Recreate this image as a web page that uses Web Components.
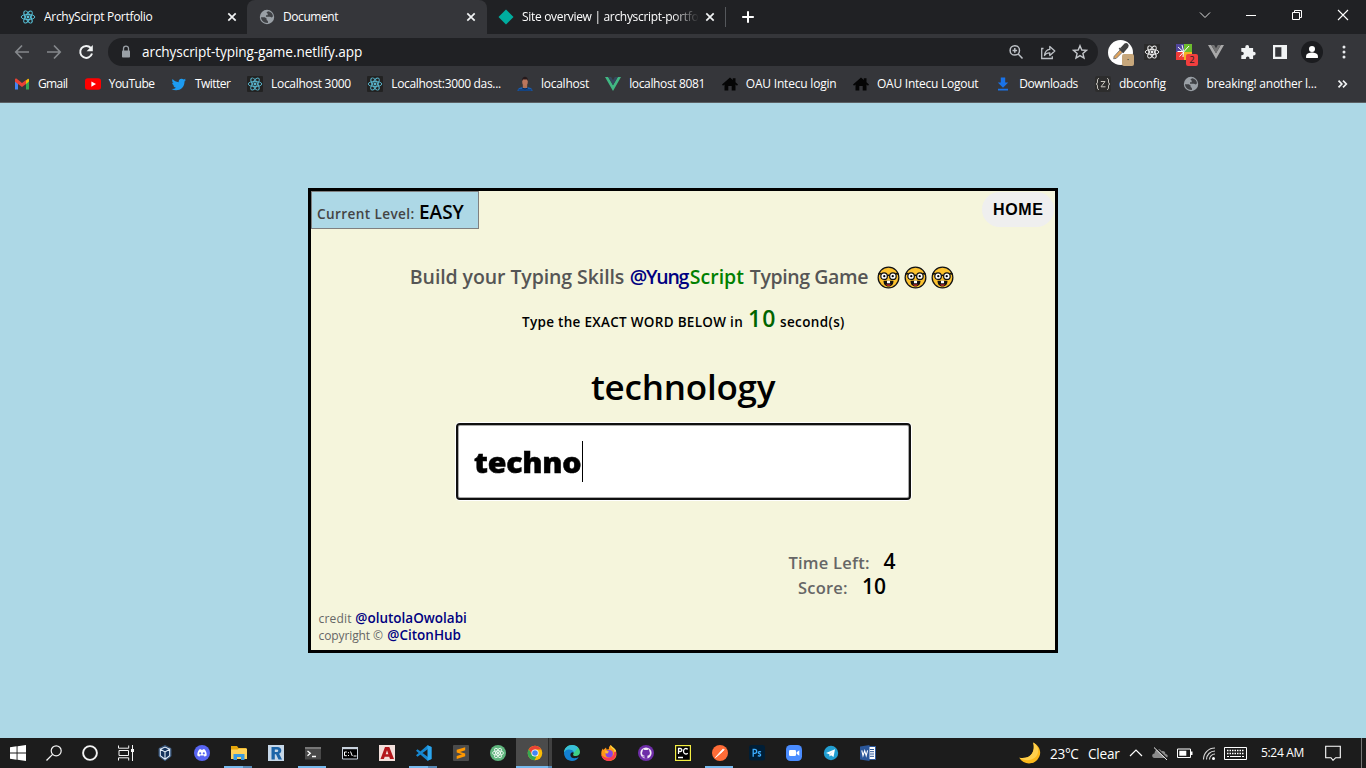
<!DOCTYPE html>
<html lang="en">
<head>
<meta charset="utf-8">
<title>Document</title>
<style>
html,body{margin:0;height:100%;overflow:hidden}
body{font-family:"Open Sans","Noto Sans",sans-serif;background:#add8e6}
</style>
</head>
<body>
<desktop-screen></desktop-screen>
<script>
const REACT = c => `<g fill="none" stroke="${c}" stroke-width=".95"><ellipse cx="8" cy="8" rx="6.8" ry="2.6"/><ellipse cx="8" cy="8" rx="6.8" ry="2.6" transform="rotate(60 8 8)"/><ellipse cx="8" cy="8" rx="6.8" ry="2.6" transform="rotate(120 8 8)"/></g><circle cx="8" cy="8" r="1.4" fill="${c}"/>`;
const ICONS = {
  react: REACT('#58c4dc'),
  reactBox: `<rect width="16" height="16" rx="1" fill="#222"/>` + REACT('#58b4cc'),
  reactExt: `<rect width="16" height="16" fill="#2b2b2b"/>` + REACT('#eee'),
  globe: `<circle cx="8" cy="8" r="7.200" fill="#9aa0a6"/><path d="M2 8.300h3.800l1.800 1.300v1.500l1.300.9v2C5 14.300 2.200 11.800 2 8.300zM7.400 3.200l2-1c2.800.6 4.400 2.600 4.600 5l-1.200 1.400-1.800-.9H7V6.300h1.700V4.800z" fill="#3f4145"/>`,
  close: `<path d="M4.300 4.300l7.400 7.400M11.700 4.300l-7.400 7.400" stroke="#f1f3f4" stroke-width="1.700"/>`,
  netlify: `<path d="M8 .5L15.500 8 8 15.500.5 8z" fill="#00ad9f"/>`,
  plus: `<path d="M8 2.200v11.600M2.200 8h11.600" stroke="#fff" stroke-width="2"/>`,
  winDown: `<path d="M3 5.500l5 5 5-5" fill="none" stroke="#ddd"/>`,
  winMin: `<path d="M3 8.500h10" stroke="#fff"/>`,
  winMax: `<path d="M3.500 5.500h7v7h-7zM5.500 5.500v-2h7v7h-2" fill="none" stroke="#fff"/>`,
  winClose: `<path d="M3 3l10 10M13 3L3 13" stroke="#fff" stroke-width="1.100"/>`,
  back: `<path d="M15 8H2M8 1.500L1.800 8 8 14.500" fill="none" stroke="#85888c" stroke-width="1.700"/>`,
  forward: `<path d="M1 8h13M8 1.500L14.200 8 8 14.500" fill="none" stroke="#85888c" stroke-width="1.700"/>`,
  reload: `<path d="M12.800 4A6 6 0 1 0 14 9.500" fill="none" stroke="#f1f3f4" stroke-width="2"/><path d="M14.800 1v6.200H8.600z" fill="#f1f3f4"/>`,
  lock: `<rect x="4" y="6.500" width="8" height="7" rx=".8" fill="#9aa0a6"/><path d="M5.500 7V4.600a2.500 2.500 0 0 1 5 0V7" fill="none" stroke="#9aa0a6" stroke-width="1.300"/>`,
  zoom: `<circle cx="6.800" cy="6.400" r="4.700" fill="none" stroke="#bdc1c6" stroke-width="1.500"/><path d="M10.200 10l4.300 4.500M4.500 6.400h4.600M6.800 4.100v4.600" stroke="#bdc1c6" stroke-width="1.500"/>`,
  share: `<path d="M3.500 4.500H1.700v10h10.600v-2.300" fill="none" stroke="#bdc1c6" stroke-width="1.300"/><path d="M4.500 11.500C5 7.800 7 5.700 9.800 5.400V2.500L14.800 7l-5 4.500V8.800C7.500 8.700 5.800 9.500 4.500 11.500z" fill="none" stroke="#bdc1c6" stroke-width="1.300" stroke-linejoin="round"/>`,
  star: `<path d="M8 1.700l1.800 4.300 4.700.4-3.600 3.100 1.100 4.600L8 11.600l-4 2.500 1.100-4.600L1.500 6.400 6.200 6z" fill="none" stroke="#c4c7cb" stroke-width="1.400"/>`,
  dropper: `<circle cx="8" cy="8" r="8" fill="#fff"/><path d="M3.600 12l.4-1.600 3.700-4L9.200 7.800l-4 4z" fill="#e0a35b" stroke="#777" stroke-width=".6"/><path d="M7.200 5.200l3 2.800M8.800 5l2-2.200c1.300-.7 2.300.5 1.600 1.600L10.400 6.800z" fill="#444" stroke="#444" stroke-width="1.200"/>`,
  spark: `<path fill="#51469b" d="M0 0h8v8H0z"/><path fill="#6cbd2e" d="M8 0h8v8H8z"/><path fill="#ef3b39" d="M0 8h8v8H0z"/><path fill="#f4b323" d="M8 8h8v8H8z"/><path d="M2 3l5 4.500M6 1l1.500 6M1.500 7.500h6M3.500 12.500L13 2M7.500 8L7 13" stroke="#fff" stroke-width="1"/>`,
  vue: `<path d="M0 1h3.200L8 9.300 12.800 1H16L8 15z" fill="#41b883"/><path d="M3.200 1h3L8 4.200 9.800 1h3L8 9.300z" fill="#35495e"/>`,
  vueGray: `<path d="M0 1h3.200L8 9.300 12.800 1H16L8 15z" fill="#a9a9a9"/><path d="M3.200 1h3L8 4.200 9.800 1h3L8 9.300z" fill="#737373"/>`,
  puzzle: `<path d="M1.300 4h4V3a1.900 1.900 0 0 1 3.800 0v1h4v3.700h.7a1.900 1.900 0 0 1 0 3.800h-.7V15H9.500v-.8a1.800 1.800 0 0 0-3.600 0v.8H1.300v-3.700H2a1.800 1.800 0 0 0 0-3.600h-.7z" fill="#f1f3f4"/>`,
  side: `<path d="M1 1h14v14H1zM3.200 3.200v9.600h6.200V3.200z" fill="#f1f3f4" fill-rule="evenodd"/>`,
  profile: `<circle cx="8" cy="8" r="8" fill="#1b1c1f"/><circle cx="8" cy="5.800" r="2.200" fill="#fff"/><path d="M3.700 12.400V11c0-2 2.800-2.600 4.300-2.600s4.300.6 4.300 2.600v1.400z" fill="#fff"/>`,
  dots: `<circle cx="8" cy="3" r="1.500" fill="#e8eaed"/><circle cx="8" cy="8" r="1.500" fill="#e8eaed"/><circle cx="8" cy="13" r="1.500" fill="#e8eaed"/>`,
  gmail: `<path d="M1 3.500V13.500h3V7z" fill="#4285f4"/><path d="M15 3.500V13.500h-3V7z" fill="#34a853"/><path d="M12 4.500L14 2.700c.5-.2 1 .3 1 .8v2L12 8z" fill="#fbbc04"/><path d="M1 3.600c0-.8 1-1.300 1.700-.8L8 7l4-3v4l-4 3.100L4 8 1 5.700z" fill="#ea4335"/>`,
  youtube: `<rect y="2.300" width="16" height="11.500" rx="2.800" fill="#f00"/><path d="M6.400 5.500v5.200L11 8.100z" fill="#fff"/>`,
  twitter: `<path d="M15 3.800l-1.500.5c.6-.4 1-.9 1.100-1.500l-1.900.7a3 3 0 0 0-5 2.700C5.200 6 3 4.900 1.600 3.100c-.8 1.500-.4 3 .9 4L1.200 6.700c0 1.400 1 2.600 2.400 2.900H2.300c.4 1.200 1.400 2 2.700 2.100A6 6 0 0 1 .5 13C6.800 16.300 13.700 12.400 13.500 5.400z" fill="#1d9bf0"/>`,
  person: `<path d="M.5 15c0-3 3-3.800 5-3.800h5c2 0 5 .8 5 3.800z" fill="#1b5cae"/><path d="M5.800 8.500h4.400v3.500H5.800z" fill="#b07357"/><ellipse cx="8" cy="5.800" rx="2.800" ry="4" fill="#bb765d"/><path d="M5 5C4.600-.6 11.400-.6 11 5L10 3.400H6z" fill="#25191b"/><path d="M1.500 14h13M5 12l3 1 3-1" stroke="#08203f" stroke-width=".8" fill="none"/>`,
  home: `<path d="M0 8.500L8 1.500 10.800 4V2.200H13.500V6.300L16 8.500 15 9.700 13.500 8.600V14.500H9.700V10H6.300v4.500H2.500V8.600L1 9.700z" fill="#050505"/>`,
  download: `<path d="M5.800 1.500h4.400v5h3L8 11.700 2.800 6.500h3zM3 12.800h10v1.700H3z" fill="#1a73e8"/>`,
  brace: `<rect width="16" height="16" rx="2" fill="#2d2d2d"/><path d="M4 2.500C2.500 2.500 2.500 3.500 2.500 5S2.500 7.800 1 8c1.500.2 1.500 1.500 1.500 3s0 2.500 1.500 2.500M12 2.500c1.500 0 1.500 1 1.500 2.500s0 2.800 1.500 3c-1.500.2-1.500 1.500-1.500 3s0 2.500-1.500 2.500M5.800 5.500h4.200L6 10.800h4.500" fill="none" stroke="#c8c5bf" stroke-width="1"/>`,
  more: `<path d="M3.500 4.700L6.800 8l-3.300 3.300M8 4.700L11.300 8 8 11.300" fill="none" stroke="#f1f3f4" stroke-width="1.700"/>`,
  nerd: `<circle cx="12" cy="12" r="10.800" fill="#fcc22f" stroke="#111" stroke-width="1.300"/><path d="M1.500 8.800c1-.8 2-1 3-1M22.500 8.800c-1-.8-2-1-3-1M10.500 10.200q1.500-1 3 0" fill="none" stroke="#111" stroke-width="1.500"/><g fill="#fff" stroke="#111" stroke-width="1.300"><circle cx="7.400" cy="10.600" r="3.400"/><circle cx="16.600" cy="10.600" r="3.400"/></g><circle cx="7.600" cy="10.600" r="1.200"/><circle cx="16.400" cy="10.600" r="1.200"/><path d="M6.800 15.300h10.400c0 3.700-2 6-5.200 6s-5.200-2.300-5.200-6z" fill="#111"/><path d="M10.400 15.300h3.200v2.700h-3.200z" fill="#fff"/><path d="M9.300 19.300h5.400c-1.300 1.700-4.100 1.700-5.400 0z" fill="#e33"/>`,
  windows: `<path d="M0 2.300L6.600 1.300V7.600H0zM7.500 1.200L16 0v7.600H7.500zM0 8.500h6.600v6.300L0 13.800zM7.500 8.500H16V16l-8.500-1.200z" fill="#fff"/>`,
  search: `<circle cx="10.200" cy="5.800" r="5" fill="none" stroke="#f4f4f4" stroke-width="1.200"/><path d="M6.600 9.400L.5 15.500" stroke="#f4f4f4" stroke-width="1.300"/>`,
  cortana: `<circle cx="8" cy="8" r="6.900" fill="none" stroke="#f4f4f4" stroke-width="1.900"/>`,
  taskview: `<path d="M.5.500v2.700h10.200V.5M.5 15.500v-2.700h10.200v2.700M1 5.500h9.500v5H1zM14.500 0v16" fill="none" stroke="#f4f4f4"/><path d="M13 4h3v3h-3z" fill="#f4f4f4"/>`,
  vbox: `<path d="M8 .5l6 3v7.800L8 15.700 2 11.300V3.500z" fill="#14335c" stroke="#41648f" stroke-width=".8"/><path d="M3.300 4.300L8 6.900l4.700-2.600v6.500L8 14.200l-4.700-3.400zM8 6.900v7.200M3.300 4.300L8 2l4.700 2.300" fill="none" stroke="#e4eef8" stroke-width="1.100"/>`,
  discord: `<circle cx="8" cy="8" r="8" fill="#5865f2"/><path d="M5.200 4.500l1.300-.4.500.7h2l.5-.7 1.300.4c1.500 2 2 3.800 1.900 6l-2 1.200-.8-1.100H6.100l-.8 1.100-2-1.200c-.1-2.200.4-4 1.900-6z" fill="#fff"/><circle cx="6.200" cy="8.300" r="1.100" fill="#5865f2"/><circle cx="9.800" cy="8.300" r="1.100" fill="#5865f2"/>`,
  folder: `<path d="M0 1h6l1.500 2H15v4H0z" fill="#e5a50a"/><path d="M0 4.500h6.500L8 3.500h8V14H0z" fill="#ffd35a"/><path d="M2.500 15V9h11v6h-3.500v-3H6v3z" fill="#3a9be0"/>`,
  revit: `<rect width="16" height="16" fill="#c6d7e8"/><path d="M3.500 2h6c4.500 0 5 5.500 1.600 6.700L14 14.500h-3.500L8 9.200H6.800v5.300H3.500zM6.800 4.400v2.500h2.100c1.800 0 1.800-2.500 0-2.500z" fill="#1b64a8"/>`,
  terminal: `<path d="M0 2h16v12.500H0z" fill="#494949"/><path d="M0 2h16v2H0z" fill="#777"/><path d="M2.500 6l2.800 2.300-2.800 2.400M7 11.500h4" fill="none" stroke="#fff" stroke-width="1.300"/>`,
  cmd: `<path d="M.5 2.500h15v11.500H.5z" fill="#000" stroke="#c9d2dd"/><path d="M0 2h16v2.200H0z" fill="#c9d2dd"/><path d="M4.800 7H2.500v3.700h2.300M6.500 7.200v1M6.500 10v1M8.500 6.500l1.800 4.500M11.500 11h3" stroke="#fff" fill="none"/>`,
  autocad: `<rect width="16" height="16" fill="#f3dfdb"/><path d="M6 2h4.300L15 14h-4l-.8-2.200H5.700L4.900 14H1.500zM8 5.300l-1.300 4h2.700z" fill="#b3161b"/>`,
  vscode: `<path d="M11.500.300l4 1.700v12l-4 1.700L0 5.700l1.500-1.500L12 12V4L1.500 11.800 0 10.300z" fill="#1688d1"/><path d="M11.500.300l4 1.700v12l-4 1.700z" fill="#2ca6ee"/>`,
  sublime: `<rect width="16" height="16" rx="1" fill="#4b4b4b"/><path d="M3.700 4.800l8.500-2.600v3L7 6.900l5.200 1.700v2.600l-8.500 2.700v-3L9 9.200 3.700 7.400z" fill="#ff9800"/>`,
  atom: `<circle cx="8" cy="8" r="8" fill="#5fb57d"/><g transform="translate(1.600 1.600) scale(.8)">${REACT('#fff')}</g>`,
  chrome: `<circle cx="8" cy="8" r="7.300" fill="#fbbc05"/><path d="M1.700 4.300A7.300 7.300 0 0 1 14.300 4.400H8l-3 5.300z" fill="#ea4335"/><path d="M1.700 4.300L5 9.800l4.500 1.500L7.500 15.300A7.300 7.300 0 0 1 1.700 4.300z" fill="#34a853"/><circle cx="8" cy="8" r="3.600" fill="#fff"/><circle cx="8" cy="8" r="2.800" fill="#4285f4"/>`,
  edge: `<path d="M0 8C.2 3 4-.1 8.300 0 13 .2 16 3.500 16 7c0 2.500-2 4-4.200 4-2.500 0-3.300-1-2.300-2.200C10.500 7 8.700 5 5.500 5 2.500 5 .5 6.500 0 8z" fill="#3fcf87"/><path d="M0 8c0-4.800 3.800-8 8.300-8 2.500 0 4.500 1 5.800 2.600L9.500 8.500C10.500 7 8.700 5 5.500 5 2.500 5 .5 6.500 0 8z" fill="#38bfd9"/><path d="M0 8c.3-2 2.500-3.400 4.800-3.400 2.700 0 4.300 1 4.900 2.800-1.500-.8-3.500.3-3.300 2.900.2 2.600 3.800 4.200 8.300 1.800C13.300 14.600 11 16 8 16c-4.500 0-8-3.600-8-8z" fill="#1380d1"/>`,
  firefox: `<path d="M14.500 5c3 7-1.500 11-6.500 11S0 12.500.3 8C.4 5.500 1.500 4 2 3.600L2.300 5 5 2.500l.5 2L8 4.300C7.500 2.500 8.500 1 9.800 0c.2 2 2.600 2.600 3.500 5.400z" fill="#ff9818"/><path d="M14.500 4.800C17 11 12.500 16 8 16 4 16 1 13.500.3 9.500 3 13.500 10 14 12.500 10c1-1.800.8-3.500.3-5z" fill="#fb3b52"/><circle cx="8.200" cy="8.700" r="3.700" fill="#8a45df"/><path d="M4 5.500l4 1-1.500 2-2.300-.2z" fill="#ffbf2c"/><path d="M9.500.5c0 3 3.800 3 3.800 6.500l2-.5C14.500 3 12 3 9.800 0z" fill="#ffd83b"/>`,
  github: `<circle cx="8" cy="8" r="8" fill="#6e2da8"/><circle cx="8" cy="8" r="5.600" fill="#f3ecf7"/><path d="M5 4.200l1.700.9h2.600l1.700-.9.400 2c1.300 2.500 0 4.300-2 4.500v3.100H6.600v-1.600c-1.400.3-2-.6-2.600-1.500 1 .1 1.200 1 2.600.7v-.700c-2-.2-3.300-2-2-4.500z" fill="#6e2da8"/>`,
  pycharm: `<rect x=".6" y=".6" width="14.800" height="14.800" fill="#000" stroke="#f4ee43" stroke-width="1.200"/><path d="M3.500 9V3.500h1.700c2.200 0 2.200 3 0 3H3.500M12.800 4.300C10.500 2.500 8.500 4 8.500 6.200s2 3.800 4.300 2M3 12.500h5" fill="none" stroke="#fff" stroke-width="1.300"/>`,
  postman: `<circle cx="8" cy="8" r="8" fill="#ff6c37"/><path d="M3.500 12.500l5.800-6.600 2-2 .8.800-1.800 2z" fill="#fff" stroke="#fff" stroke-width=".9"/>`,
  ps: `<rect width="16" height="15.500" rx="2.500" fill="#001e36"/><path d="M4.200 11.700V4.300h1.600c2.500 0 2.500 4 0 4H4.200M12 6.900c-2.700-1.100-3.500 1-1.700 1.700 2.400.9 1.300 3.300-1.500 2.100" fill="none" stroke="#3cadff" stroke-width="1.300"/>`,
  zoomApp: `<rect width="16" height="16" rx="4.500" fill="#4a8cff"/><rect x="3" y="5" width="7" height="6" rx="1.300" fill="#fff"/><path d="M10.600 7.200L13.300 5.300v5.400L10.600 8.800z" fill="#fff"/>`,
  telegram: `<circle cx="8" cy="8" r="7.200" fill="#229ed1"/><path d="M3 8l9-3.700-1.500 7.700-2.500-1.700-1.300 1.200-.4-2.300z" fill="#fff"/><path d="M6.300 9.200l4-3.300-3.200 3.700-.4 1.900z" fill="#b9dcec"/>`,
  word: `<path d="M8.500 1.500H15.500v13H8.500z" fill="#fff" stroke="#2b579a"/><path d="M10 4.500h4M10 6.700h4M10 9h4M10 11.300h4" stroke="#2b579a"/><path d="M0 1.500L9.500 0v16L0 14.500z" fill="#2b579a"/><path d="M1.800 5.300L3 10.700l1.700-5 1.500 5L7.600 5.300" fill="none" stroke="#fff" stroke-width="1.100"/>`,
  moon: `<path d="M10.300.3C15.800 3 17 9 13.200 13 9.500 17 3 16.300.2 11.500 8.500 12.800 12.200 7 10.300.3z" fill="#fdb91b"/><path d="M10.300.3C15 3 15 8.500 11.500 11.500 8 14 3.500 13.500.2 11.500 8.500 12.800 12.200 7 10.300.3z" fill="#ffd04d"/>`,
  up: `<path d="M2 11l6-6 6 6" fill="none" stroke="#fff" stroke-width="1.200"/>`,
  cloud: `<path d="M2.500 13C-.8 12.500-.3 8.500 2.500 8.600 2.500 4 8 3 9.500 6.300c3-.8 4 1.200 3.800 2.600 3.200 0 3.200 4.100.2 4.100z" fill="#8b8b8b"/><path d="M2.700 1.800L15.700 14.300" stroke="#1c1c1c" stroke-width="1.300"/><path d="M2 2.500L15 15" stroke="#eee"/>`,
  battery: `<path d="M.5 4h13v8.500H.5z" fill="none" stroke="#fff"/><path d="M2.300 5.800h7v5h-7zM14 6.500h1.500V10H14z" fill="#fff"/>`,
  wifi: `<g fill="none" stroke="#d8d8d8" stroke-width="1.100"><path d="M2.500 14.500C2.500 8 7.500 3 14 3M5.500 14.500c0-4.700 3.800-8.500 8.500-8.500M8.500 14.500c0-3 2.500-5.500 5.500-5.500"/></g><circle cx="12.500" cy="13.500" r="1.500" fill="#fff"/>`,
  keyboard: `<path d="M.5.500h22v12H.5z" fill="none" stroke="#fff"/><path d="M3 3.500h17M3 6.500h17" stroke="#fff" stroke-width="1.300" stroke-dasharray="1.500 1"/><path d="M3 9.500h2M6 9.500h11M18 9.500h2" stroke="#fff"/>`,
  notice: `<path d="M.7 1.200h14.600v11.500h-4.600L8 15.300 6 12.700H.7z" fill="none" stroke="#fff" stroke-width="1.100"/>`
};
function define(name, html, setup) {
  customElements.define(name, class extends HTMLElement {
    constructor() {
      super();
      const t = document.createElement('template');
      t.innerHTML = html;
      this.attachShadow({ mode: 'open' }).append(t.content.cloneNode(true));
    }
    connectedCallback() { if (setup) setup(this, this.shadowRoot); }
  });
}

define('desktop-screen', `
<style>:host{display:grid;grid-template-rows:103px 635px 30px;width:1366px;height:768px}</style>
<browser-chrome></browser-chrome><typing-page></typing-page><task-bar></task-bar>`);

define('browser-chrome', `
<style>
:host{display:grid;grid-template-rows:34px 36px 32px 1px;background:#35363a;color:#fff;font-size:12px}
.strip{display:flex;background:#202124;align-items:center}
.strip .sep{width:1px;height:20px;background:#55585c;margin-left:-2px}
.strip .add{margin-left:14px}
.win{display:flex;margin-left:auto;align-self:flex-start;height:29px;align-items:center}
.win ui-icon{margin:0 15px}
.bar{display:flex;align-items:center;padding-left:6px}
.bar .n{margin:0 8px}
.omni{display:flex;align-items:center;width:980px;height:28px;border-radius:14px;background:#202124;margin-left:6px;padding-left:10px;font-size:13.600px}
.omni fit-text{margin:0 0 2px 8px}
.omni .tools{display:flex;margin-left:auto;padding-right:2px}
.ext{display:flex;padding-left:6px}
.ext div{position:relative;width:32px;height:30px;display:flex;align-items:center;justify-content:center}
.badge{position:absolute;left:18px;top:17px;width:12px;height:12px;border-radius:2px;background:#c7a77b;color:#222;font:9.500px/12px "Open Sans",sans-serif;text-align:center}
.badge.r{background:#f13e3e}
.books{display:flex;align-items:center;padding:0 0 5px 14px;gap:16.200px}
.books ui-icon.m{margin-left:2px}
.line{background:#5b6064}
</style>
<div class="strip">
<browser-tab icon="react" width="247" lead="20"><fit-text w="109">ArchyScirpt Portfolio</fit-text></browser-tab>
<browser-tab active icon="globe" width="240" lead="12"><fit-text w="56">Document</fit-text></browser-tab>
<browser-tab fade icon="netlify" width="240" lead="11"><fit-text w="182">Site overview | archyscript-portfoli</fit-text></browser-tab>
<span class="sep"></span><ui-icon class="add" name="plus"></ui-icon>
<div class="win"><ui-icon name="winDown"></ui-icon><ui-icon name="winMin"></ui-icon><ui-icon name="winMax"></ui-icon><ui-icon name="winClose"></ui-icon></div>
</div>
<div class="bar">
<ui-icon class="n" name="back"></ui-icon><ui-icon class="n" name="forward"></ui-icon><ui-icon class="n" name="reload"></ui-icon>
<div class="omni"><ui-icon name="lock"></ui-icon><fit-text w="220">archyscript-typing-game.netlify.app</fit-text>
<div class="tools"><ui-icon class="n" name="zoom"></ui-icon><ui-icon class="n" name="share"></ui-icon><ui-icon class="n" name="star"></ui-icon></div></div>
<div class="ext"><div><ui-icon name="dropper" w="25"></ui-icon><span class="badge">·</span></div><div><ui-icon name="reactExt"></ui-icon></div><div><ui-icon name="spark"></ui-icon><span class="badge r">2</span></div><div><ui-icon name="vueGray"></ui-icon></div><div><ui-icon name="puzzle"></ui-icon></div><div><ui-icon name="side"></ui-icon></div><div><ui-icon name="profile" w="22"></ui-icon></div><div><ui-icon name="dots"></ui-icon></div></div>
</div>
<div class="books">
<book-mark icon="gmail"><fit-text w="30.500">Gmail</fit-text></book-mark>
<book-mark icon="youtube"><fit-text w="46">YouTube</fit-text></book-mark>
<book-mark icon="twitter"><fit-text w="36">Twitter</fit-text></book-mark>
<book-mark icon="reactBox"><fit-text w="80">Localhost 3000</fit-text></book-mark>
<book-mark icon="reactBox"><fit-text w="109.500">Localhost:3000 das...</fit-text></book-mark>
<book-mark icon="person"><fit-text w="48">localhost</fit-text></book-mark>
<book-mark icon="vue"><fit-text w="76.500">localhost 8081</fit-text></book-mark>
<book-mark icon="home"><fit-text w="91">OAU Intecu login</fit-text></book-mark>
<book-mark icon="home"><fit-text w="102">OAU Intecu Logout</fit-text></book-mark>
<book-mark icon="download"><fit-text w="59.500">Downloads</fit-text></book-mark>
<book-mark icon="brace"><fit-text w="47.500">dbconfig</fit-text></book-mark>
<book-mark icon="globe"><fit-text w="110">breaking! another l...</fit-text></book-mark>
<ui-icon class="m" name="more"></ui-icon>
</div>
<div class="line"></div>`);

define('browser-tab', `
<style>
:host{display:flex;align-items:center;box-sizing:border-box;height:34px;flex:none;padding-bottom:1px}
:host([active]){background:#35363a;border-radius:8px 8px 0 0}
.t{margin-left:8px;flex:1;overflow:hidden}
:host([fade]) .t{-webkit-mask:linear-gradient(90deg,#000 150px,transparent 177px)}
ui-icon.x{margin-right:7px}
:host([active]) .x{margin-right:8px}
:host([fade]) .x{margin:0 9px 0 3px}
</style><ui-icon class="i"></ui-icon><div class="t"><slot></slot></div><ui-icon class="x" name="close"></ui-icon>`,
(h, r) => { h.style.width = h.getAttribute('width') + 'px'; h.style.paddingLeft = h.getAttribute('lead') + 'px'; r.querySelector('.i').setAttribute('name', h.getAttribute('icon')); });

define('book-mark', `<style>:host{display:flex;align-items:center;gap:8px;flex:none}</style><ui-icon></ui-icon><slot></slot>`,
(h, r) => r.querySelector('ui-icon').setAttribute('name', h.getAttribute('icon')));

define('typing-page', `
<style>
:host{display:block;background:#add8e6;padding-top:85px;box-sizing:border-box}
.card{box-sizing:border-box;width:750px;height:465px;margin:0 auto;border:3px solid #000;background:#f5f5dc;display:flex;flex-direction:column;font-weight:600;color:#000}
.top{display:flex;justify-content:space-between;height:66px}
.level{box-sizing:border-box;width:168px;height:38px;border:1px solid #808080;background:#add8e6;padding-left:5px;display:flex;align-items:baseline;line-height:40px;font-size:13.600px;color:#444}
.level b{font-weight:600;color:#000;font-size:19px;margin-left:5px}
button{width:72px;height:35px;margin:1px 1px 0 0;padding:0;border:0;border-radius:20px;background:#efefef;color:#000;font:bold 16px "Liberation Sans",sans-serif}
h1{margin:0 2px 0 0;height:40px;line-height:40px;font-size:19.500px;font-weight:600;color:#555;display:flex;justify-content:center;align-items:center}
h1 ui-icon{margin-left:4.200px}
h1 ui-icon.f{margin-left:8px}
.navy{color:#000080;margin-left:5px}.green{color:#008000;margin-right:6px}
.hint{height:44px;display:flex;align-items:baseline;justify-content:center;font-size:13.500px;line-height:42px}
.hint b{font-size:23px;font-weight:600;color:#006400;margin:0 5px}
.word{height:82px;line-height:92px;text-align:center;font-size:35px}
.foot{margin-top:auto;padding:0 0 6px 7.500px;font-size:12px;font-weight:500;line-height:17px;color:#666}
.foot div{display:flex;align-items:baseline;gap:3.800px}
.foot b{font-size:13.500px;font-weight:600;color:#000080}
.stats{padding:48px 0 0 456px;width:150px;color:#666;font-size:16.500px}
.stats div{display:flex;align-items:baseline;justify-content:center;height:25px;line-height:27px}
.stats b{font-weight:600;font-size:21px;color:#000;margin-left:14px}
</style>
<div class="card">
<div class="top"><div class="level"><fit-text w="97">Current Level:</fit-text><b><fit-text w="45">EASY</fit-text></b></div><button><fit-text w="50">HOME</fit-text></button></div>
<h1><fit-text w="215">Build your Typing Skills</fit-text><fit-text class="navy" w="60">@Yung</fit-text><fit-text class="green" w="54">Script</fit-text><fit-text w="119">Typing Game</fit-text><ui-icon class="f" name="nerd" w="23"></ui-icon><ui-icon name="nerd" w="23"></ui-icon><ui-icon name="nerd" w="23"></ui-icon></h1>
<div class="hint"><fit-text w="221">Type the EXACT WORD BELOW in</fit-text><b><fit-text w="27">10</fit-text></b><fit-text w="64">second(s)</fit-text></div>
<div class="word"><fit-text w="184">technology</fit-text></div>
<word-input><fit-text w="100">techno</fit-text></word-input>
<div class="stats"><div><fit-text w="81">Time Left:</fit-text><b><fit-text w="12">4</fit-text></b></div><div><fit-text w="50">Score:</fit-text><b><fit-text w="24">10</fit-text></b></div></div>
<div class="foot"><div><fit-text w="33">credit</fit-text><b><fit-text w="112">@olutolaOwolabi</fit-text></b></div><div><fit-text w="65">copyright ©</fit-text><b><fit-text w="74">@CitonHub</fit-text></b></div></div>
</div>`);

define('word-input', `
<style>
:host{display:flex;align-items:center;box-sizing:border-box;width:455px;height:77px;margin:0 0 0 145px;flex:none;background:#fff;border:2px solid #101010;border-radius:4px;box-shadow:0 0 0 1px #fff,inset 0 0 0 1px #aaa;padding-left:16px;font:800 28px/41px "Open Sans",sans-serif}
.v{width:108px;padding-top:2px;transform:scaleX(1.08);transform-origin:0 0;-webkit-text-stroke:.5px #000}
i{width:1px;height:41px;background:#000}
</style><div class="v"><slot></slot></div><i></i>`);

define('task-bar', `
<style>
:host{display:flex;background:#1c1c1c;color:#fff;align-items:center}
.apps{display:flex;height:30px}
.a{width:37px;display:flex;align-items:center;justify-content:center;box-sizing:border-box;position:relative}
.a.s{width:36px}
.a.v{margin-left:1.500px}
.a.o::after{content:"";position:absolute;left:4px;width:28px;height:2px;bottom:0;background:#76b9ed}
.a.m::after{background:linear-gradient(90deg,#76b9ed 19px,#5689b5 19px)}
.a.act{background:linear-gradient(90deg,#4b4b4b 32px,#292929 32px,#292929 33px,#414141 33px,#414141 36px,transparent 36px)}
.a.act::after{left:0;width:36px;background:linear-gradient(90deg,#76b9ed 32px,#5689b5 32px)}
.a.v,.a.v~.a{left:.5px}
.tray{margin-left:auto;width:347px;display:flex;align-items:center;font-size:13.600px;height:30px}
.tray .time{font-size:12px;margin-left:14px;position:relative;top:-1px}
.tray .end{width:1px;height:30px;background:#777;margin-left:20px}
</style>
<div class="apps"></div>
<div class="tray"><ui-icon name="moon" w="22"></ui-icon><fit-text w="29" style="margin-left:9px">23°C</fit-text><fit-text w="32" style="margin-left:9px">Clear</fit-text><ui-icon name="up" style="margin-left:8px"></ui-icon><ui-icon name="cloud" style="margin-left:8px"></ui-icon><ui-icon name="battery" style="margin-left:9px"></ui-icon><ui-icon name="wifi" style="margin-left:8px"></ui-icon><ui-icon name="keyboard" w="23" h="13" vb="0 0 23 13" style="margin-left:7px"></ui-icon><fit-text class="time" w="43">5:24 AM</fit-text><ui-icon name="notice" style="margin-left:21px"></ui-icon><span class="end"></span></div>`,
(h, r) => {
  const box = r.querySelector('.apps');
  'windows:s search:s cortana:s taskview:s vbox:v discord folder:o,m revit terminal:o cmd autocad vscode:o,m sublime atom chrome:o,act edge firefox github pycharm postman:o ps zoomApp telegram word'.split(' ').forEach(e => {
    const [n, c = ''] = e.split(':');
    const d = document.createElement('div');
    d.className = 'a ' + c.replace(',', ' ');
    d.innerHTML = `<ui-icon name="${n}"></ui-icon>`;
    box.append(d);
  });
});

define('ui-icon', `<style>:host{display:block;flex:none;width:16px;height:16px}svg{display:block;width:100%;height:100%}</style><div style="display:contents"></div>`,
(h, r) => {
  const w = h.getAttribute('w') || 16, n = h.getAttribute('name');
  h.style.width = w + 'px'; h.style.height = (h.getAttribute('h') || w) + 'px';
  const vb = h.getAttribute('vb') || (n === 'nerd' ? '0 0 24 24' : '0 0 16 16');
  r.querySelector('div').innerHTML = `<svg viewBox="${vb}">${ICONS[n] || ''}</svg>`;
});

/* Spreads its text over a given width by letter-spacing. */
define('fit-text', `<style>:host{display:inline-block;white-space:nowrap}span{display:inline-block}</style><span><slot></slot></span>`,
(h, r) => {
  const w = +h.getAttribute('w'), s = r.querySelector('span');
  const n = h.textContent.length;
  const nat = s.offsetWidth;
  h.style.letterSpacing = (n > 1 ? (w - nat) / (n - 1) : 0) + 'px';
  h.style.width = w + 'px';
});
</script>
</body>
</html>
